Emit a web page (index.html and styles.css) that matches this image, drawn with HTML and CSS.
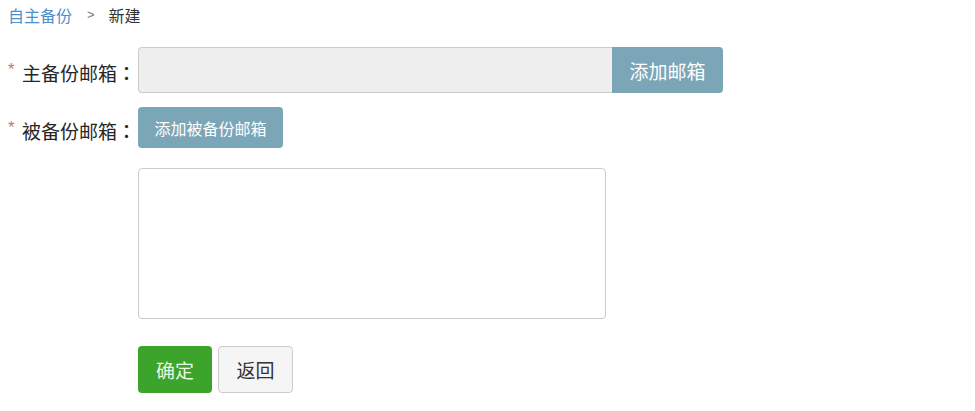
FILE: index.html
```html
<!DOCTYPE html>
<html lang="zh">
<head>
<meta charset="utf-8">
<title>新建</title>
<link rel="stylesheet" href="styles.css">
</head>
<body>
<div class="page">
  <div class="crumb">
    <a class="crumb-link" href="#">自主备份</a>
    <span class="crumb-sep">&gt;</span>
    <span class="crumb-cur">新建</span>
  </div>
  <div class="row row-main">
    <label class="label"><span class="star">*</span>主备份邮箱<span class="colon">：</span></label>
    <input class="main-input" type="text">
    <button class="btn-add">添加邮箱</button>
  </div>
  <div class="row row-sub">
    <label class="label"><span class="star">*</span>被备份邮箱<span class="colon">：</span></label>
    <button class="btn-add-sub">添加被备份邮箱</button>
  </div>
  <div class="row row-area">
    <textarea class="area"></textarea>
  </div>
  <div class="row row-actions">
    <button class="btn-ok">确定</button>
    <button class="btn-back">返回</button>
  </div>
</div>
</body>
</html>
```

FILE: styles.css
```css
* { box-sizing: border-box; }
html, body { margin: 0; padding: 0; background: #fff; }
body {
  font-family: "Noto Sans CJK SC", "Noto Sans", sans-serif;
  color: #333;
}
.page { padding: 0 8px; }
.crumb {
  height: 30px;
  line-height: 30px;
  font-size: 16px;
  display: flex;
  align-items: center;
}
.crumb-link { color: #4a8fcb; text-decoration: none; }
.crumb-sep { color: #777; font-size: 13px; margin: 0 14px 0 15px; font-family: "Liberation Sans", sans-serif; }
.crumb-cur { color: #333; }
.row { display: flex; align-items: center; }
.row-area, .row-actions { padding-left: 130px; }
.label {
  width: 130px;
  flex: none;
  font-size: 19px;
  font-weight: 400;
  color: #262626;
  padding-top: 5px;
  white-space: nowrap;
  display: flex;
  align-items: center;
}
.star {
  color: #c8756f;
  font-size: 17px;
  width: 14px;
  align-self: flex-start;
  margin-top: 1px;
  font-family: "Liberation Sans", sans-serif;
  font-weight: 400;
}
.colon { font-family: "Noto Sans CJK TC", sans-serif; font-weight: 500; }
.row-main { margin-top: 17px; height: 46px; }
.main-input {
  width: 474px;
  height: 46px;
  background: #eeeeee;
  border: 1px solid #cccccc;
  border-right: none;
  border-radius: 4px 0 0 4px;
  outline: none;
  margin: 0;
}
.btn-add {
  width: 111px;
  height: 46px;
  border: none;
  background: #7aa6b7;
  color: #fff;
  font-family: inherit;
  font-size: 19px;
  border-radius: 0 4px 4px 0;
  padding: 0;
}
.row-sub { margin-top: 14px; height: 41px; }
.btn-add-sub {
  width: 145px;
  height: 41px;
  border: none;
  background: #7aa6b7;
  color: #fff;
  font-family: inherit;
  font-size: 16px;
  border-radius: 4px;
  padding: 0;
}
.row-area { margin-top: 20px; }
.area {
  width: 468px;
  height: 151px;
  border: 1px solid #cccccc;
  border-radius: 4px;
  resize: none;
  margin: 0;
  background: #fff;
}
.row-actions { margin-top: 27px; gap: 6px; }
.btn-ok {
  width: 74px;
  height: 47px;
  border: none;
  background: #3da42b;
  color: #e9f7e4;
  font-family: inherit;
  font-size: 19px;
  border-radius: 4px;
  padding: 0;
}
.btn-back {
  width: 75px;
  height: 47px;
  border: 1px solid #cccccc;
  background: #f5f5f5;
  color: #333;
  font-family: inherit;
  font-size: 19px;
  border-radius: 4px;
  padding: 0;
}
```
